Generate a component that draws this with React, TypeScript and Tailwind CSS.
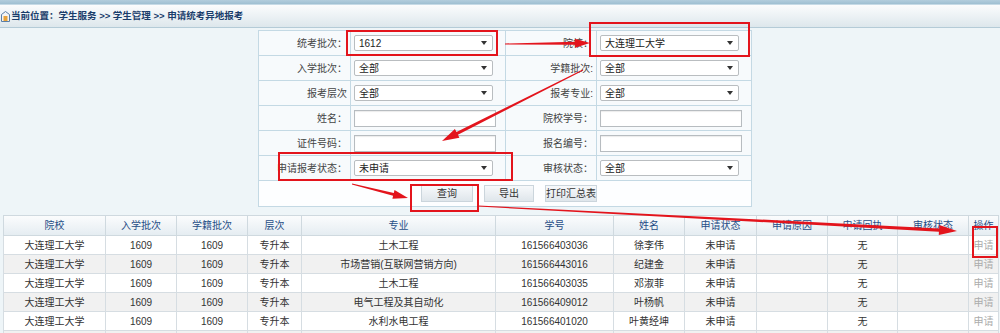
import React from "react";

const font = { fontFamily: '"Liberation Sans", "Noto Sans CJK SC", sans-serif' };

const headers = ["院校", "入学批次", "学籍批次", "层次", "专业", "学号", "姓名", "申请状态", "申请原因", "申请回执", "审核状态", "操作"];

const students = [
  ["土木工程", "161566403036", "徐李伟"],
  ["市场营销(互联网营销方向)", "161566443016", "纪建金"],
  ["土木工程", "161566403035", "邓淑菲"],
  ["电气工程及其自动化", "161566409012", "叶杨帆"],
  ["水利水电工程", "161566401020", "叶黄经坤"],
];

function Select({ value }: { value: string }) {
  return (
    <div className="flex h-[16px] w-[139px] items-center justify-between rounded-[2px] border border-[#b9bdc0] bg-white pl-[4px] pr-[5px] text-[10px] text-[#222]">
      <span>{value}</span>
      <span className="h-0 w-0 border-x-[3px] border-t-[4px] border-x-transparent border-t-[#333]" />
    </div>
  );
}

function Input() {
  return <div className="h-[17px] w-[142px] border border-[#b7bcc0] bg-white shadow-[inset_0_1px_1px_rgba(0,0,0,0.08)]" />;
}

function Label({ text }: { text: string }) {
  return <td className="border border-[#c4d9e4] pr-[3px] text-right text-[10px] text-[#444]">{text}</td>;
}

function Value({ children }: { children: React.ReactNode }) {
  return (
    <td className="border border-[#c4d9e4] pl-[3px]">
      <div className="flex items-center">{children}</div>
    </td>
  );
}

function Button({ text, w }: { text: string; w: string }) {
  return (
    <div className={`flex h-[17px] ${w} items-center justify-center border border-[#cbd5dc] bg-gradient-to-b from-[#f7f9fb] to-[#dfe6eb] text-[10px] text-[#333]`}>
      {text}
    </div>
  );
}

function arrow(x1: number, y1: number, x2: number, y2: number, head: number, hw: number, sw: number) {
  const dx = x2 - x1;
  const dy = y2 - y1;
  const len = Math.hypot(dx, dy);
  const ux = dx / len;
  const uy = dy / len;
  const nx = -uy;
  const ny = ux;
  const bx = x2 - ux * head;
  const by = y2 - uy * head;
  const pts = [
    [x1 + nx * 0.5, y1 + ny * 0.5],
    [bx + nx * sw, by + ny * sw],
    [bx + nx * hw, by + ny * hw],
    [x2, y2],
    [bx - nx * hw, by - ny * hw],
    [bx - nx * sw, by - ny * sw],
    [x1 - nx * 0.5, y1 - ny * 0.5],
  ];
  return pts.map((p) => `${p[0].toFixed(1)},${p[1].toFixed(1)}`).join(" ");
}

function Annotations() {
  const red = "#e3141c";
  return (
    <svg className="pointer-events-none absolute left-0 top-0" width="1000" height="333" viewBox="0 0 1000 333">
      <rect x="347" y="31" width="150" height="24" fill="none" stroke={red} strokeWidth="2" />
      <rect x="590" y="23" width="159" height="33" fill="none" stroke={red} strokeWidth="2" />
      <rect x="279" y="153" width="233" height="27" fill="none" stroke={red} strokeWidth="2" />
      <rect x="411" y="185" width="67" height="26" fill="none" stroke={red} strokeWidth="2" />
      <rect x="973" y="227" width="24" height="30" fill="none" stroke={red} strokeWidth="2" />
      <polygon points={arrow(505, 44, 590, 43, 15, 4.5, 1.5)} fill={red} />
      <polygon points={arrow(583, 70, 442, 141, 17, 5, 1.5)} fill={red} />
      <polygon points={arrow(352, 184, 408, 198, 15, 4.5, 1.5)} fill={red} />
      <polygon points={arrow(478, 206, 957, 231, 18, 5, 1.7)} fill={red} />
    </svg>
  );
}

export default function App() {
  return (
    <div className="relative h-[333px] w-[1000px] overflow-hidden bg-[#eef5f8]" style={font}>
      <div className="h-[5px] border-b border-[#c6dae6] bg-gradient-to-b from-[#b3cddd] to-[#9fbfd2]" />
      <div className="flex h-[23px] items-center border-b border-[#b4cbd7] bg-gradient-to-b from-[#fbfcfd] to-[#dde7ec] pl-[1px]">
        <svg width="9" height="11" viewBox="0 0 9 11" className="mr-[1px]">
          <path d="M0.5 3.5 L4.5 0.5 L8.5 3.5 V10.5 H0.5 Z" fill="#f4f4f4" stroke="#5b7fa6" />
          <rect x="2.5" y="5" width="4" height="5" fill="#e9a33a" />
        </svg>
        <span className="text-[9.5px] font-bold text-[#1a3d6b]">当前位置：学生服务 &gt;&gt; 学生管理 &gt;&gt; 申请统考异地报考</span>
      </div>

      <div className="ml-[258px] mt-[2px] w-[493px]">
        <table className="w-full table-fixed border-collapse border border-[#b7d0de] bg-[#f7fafc]">
          <colgroup>
            <col className="w-[92px]" />
            <col className="w-[155px]" />
            <col className="w-[91px]" />
            <col className="w-[155px]" />
          </colgroup>
          <tbody>
            <tr className="h-[25px]">
              <Label text="统考批次：" />
              <Value><Select value="1612" /></Value>
              <Label text="院校：" />
              <Value><Select value="大连理工大学" /></Value>
            </tr>
            <tr className="h-[25px]">
              <Label text="入学批次：" />
              <Value><Select value="全部" /></Value>
              <Label text="学籍批次:" />
              <Value><Select value="全部" /></Value>
            </tr>
            <tr className="h-[25px]">
              <Label text="报考层次" />
              <Value><Select value="全部" /></Value>
              <Label text="报考专业:" />
              <Value><Select value="全部" /></Value>
            </tr>
            <tr className="h-[25px]">
              <Label text="姓名：" />
              <Value><Input /></Value>
              <Label text="院校学号：" />
              <Value><Input /></Value>
            </tr>
            <tr className="h-[25px]">
              <Label text="证件号码：" />
              <Value><Input /></Value>
              <Label text="报名编号：" />
              <Value><Input /></Value>
            </tr>
            <tr className="h-[25px]">
              <Label text="申请报考状态：" />
              <Value><Select value="未申请" /></Value>
              <Label text="审核状态：" />
              <Value><Select value="全部" /></Value>
            </tr>
            <tr className="h-[26px] bg-[#fdfeff]">
              <td colSpan={4} className="border border-[#c4d9e4]">
                <div className="flex items-center justify-center gap-[11px] pl-[8px]">
                  <Button text="查询" w="w-[52px]" />
                  <Button text="导出" w="w-[50px]" />
                  <Button text="打印汇总表" w="w-[52px]" />
                </div>
              </td>
            </tr>
          </tbody>
        </table>
      </div>

      <div className="mt-[8px] px-[3px]">
        <table className="w-[995px] table-fixed border-collapse text-center text-[10px] text-[#333]">
          <colgroup>
            <col className="w-[102px]" />
            <col className="w-[71px]" />
            <col className="w-[71px]" />
            <col className="w-[54px]" />
            <col className="w-[194px]" />
            <col className="w-[118px]" />
            <col className="w-[71px]" />
            <col className="w-[72px]" />
            <col className="w-[71px]" />
            <col className="w-[70px]" />
            <col className="w-[71px]" />
            <col className="w-[30px]" />
          </colgroup>
          <thead>
            <tr className="h-[20px] bg-gradient-to-b from-[#fbfcfd] to-[#e4ecf1]">
              {headers.map((h) => (
                <th key={h} className="border border-[#cfd9df] font-normal text-[#1f4d86]">
                  {h}
                </th>
              ))}
            </tr>
          </thead>
          <tbody>
            {students.map((s, i) => (
              <tr key={i} className={`h-[19px] ${i % 2 === 1 ? "bg-[#f1f1f1]" : "bg-white"}`}>
                <td className="border border-[#d6dde2]">大连理工大学</td>
                <td className="border border-[#d6dde2]">1609</td>
                <td className="border border-[#d6dde2]">1609</td>
                <td className="border border-[#d6dde2]">专升本</td>
                <td className="border border-[#d6dde2]">{s[0]}</td>
                <td className="border border-[#d6dde2]">{s[1]}</td>
                <td className="border border-[#d6dde2]">{s[2]}</td>
                <td className="border border-[#d6dde2]">未申请</td>
                <td className="border border-[#d6dde2]"></td>
                <td className="border border-[#d6dde2]">无</td>
                <td className="border border-[#d6dde2]"></td>
                <td className="border border-[#d6dde2] text-[#ababab]">申请</td>
              </tr>
            ))}
            <tr className="h-[19px] bg-[#f1f1f1]">
              {headers.map((h) => (
                <td key={h} className="border border-[#d6dde2]"></td>
              ))}
            </tr>
          </tbody>
        </table>
      </div>

      <Annotations />
    </div>
  );
}
